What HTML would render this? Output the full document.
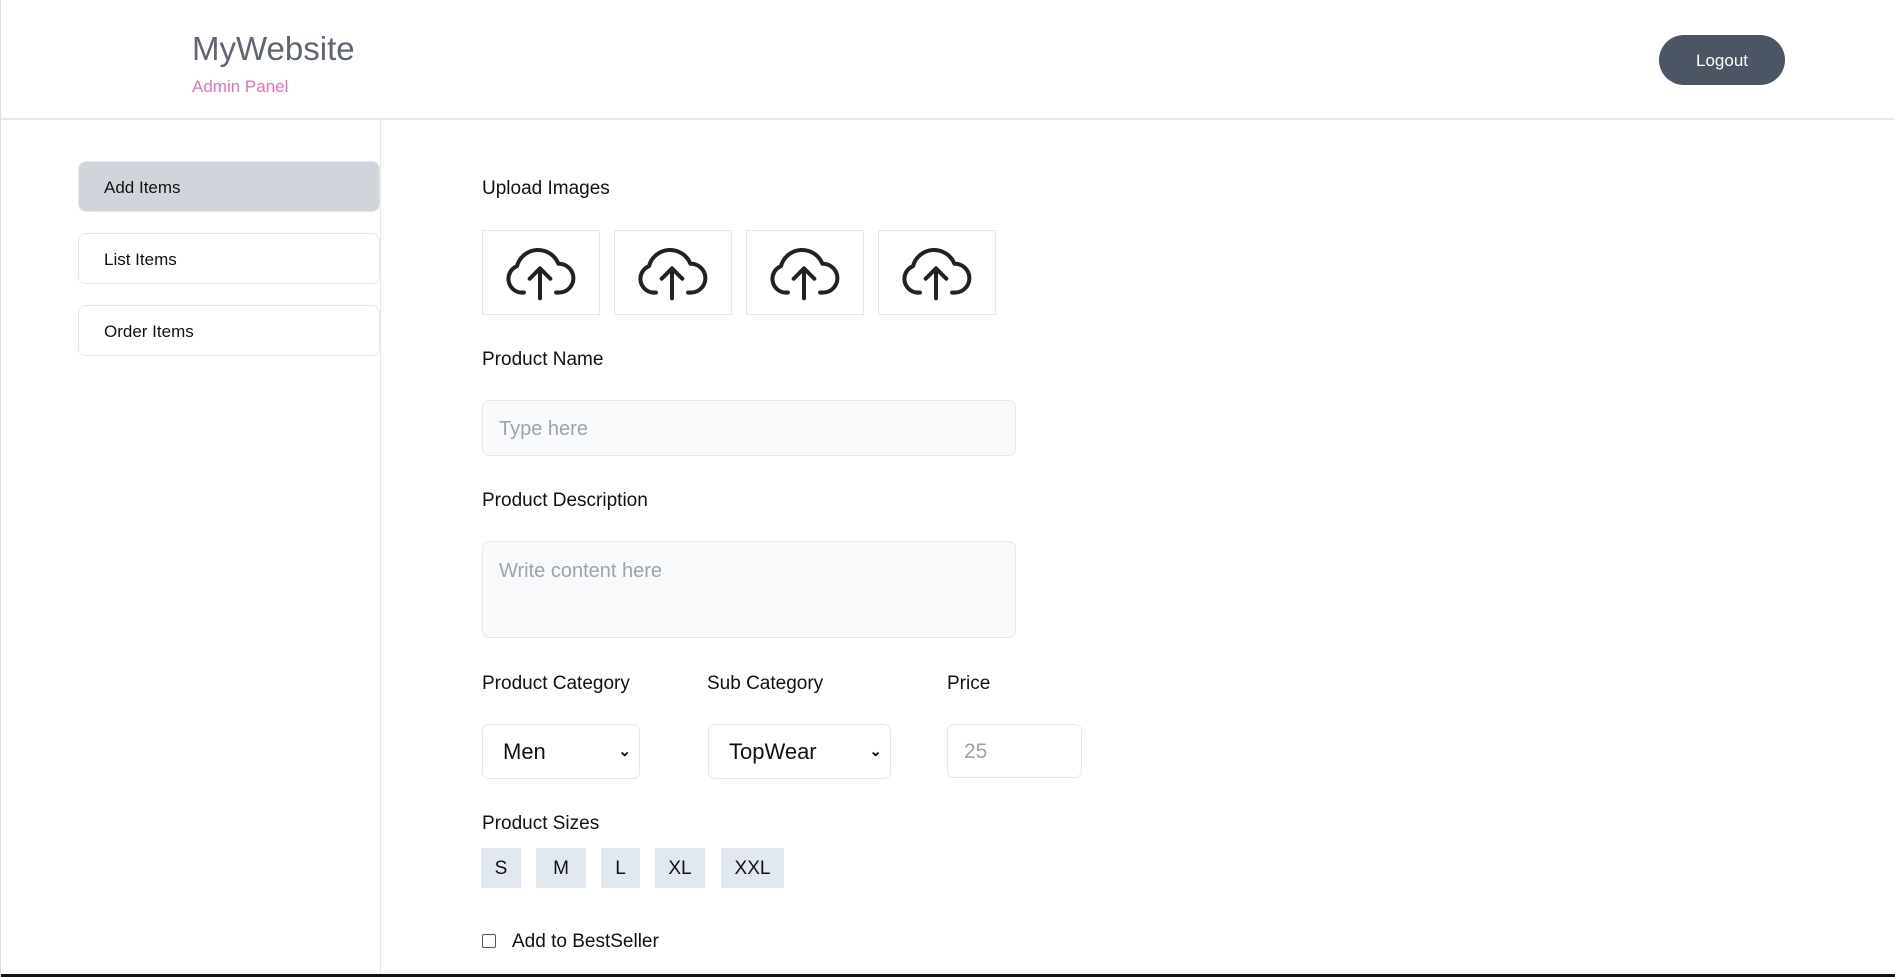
<!DOCTYPE html>
<html><head><meta charset="utf-8"><style>
*{box-sizing:border-box;margin:0;padding:0}
body{width:1895px;height:977px;overflow:hidden;background:#fff;font-family:"Liberation Sans",sans-serif;color:#000;position:relative;border-left:1px solid #ddd}
.abs{position:absolute}
.lbl{position:absolute;font-size:19px;color:#111;line-height:22px}
.box{position:absolute;border:1px solid #e5e7eb;background:#fff}
.side{position:absolute;left:77px;width:302px;height:51px;border:1px solid #e5e7eb;border-radius:8px;font-size:17px;padding-left:25px;line-height:51px;color:#111}
.inp{position:absolute;border:1px solid #e5e7eb;border-radius:7px;background:#f8f9fb;color:#9ca3af;font-size:20px;padding-left:16px}
.sel{position:absolute;border:1px solid #e5e7eb;border-radius:7px;background:#fff;font-size:22px;color:#111;padding-left:20px;line-height:54px}
.sz{position:absolute;top:848px;height:40px;background:#e2e8f0;font-size:19px;line-height:42px;text-align:center;color:#111}
</style></head><body>
<div class="abs" style="left:0;top:118px;width:1895px;height:2px;background:#e5e7eb"></div>
<div class="side" style="top:161px;background:#d1d5db">Add Items</div>
<div class="side" style="top:233px">List Items</div>
<div class="side" style="top:305px">Order Items</div>
<div class="abs" style="left:379px;top:120px;width:1px;height:857px;background:#e5e7eb"></div>
<div class="abs" style="left:191px;top:30px;font-size:33px;color:#5f6672">MyWebsite</div>
<div class="abs" style="left:191px;top:77px;font-size:17px;color:#ec6fb5">Admin Panel</div>
<div class="abs" style="left:1658px;top:35px;width:126px;height:50px;border-radius:25px;background:#4b5563;color:#fff;font-size:17px;text-align:center;line-height:52px">Logout</div>
<div class="lbl" style="left:481px;top:178px">Upload Images</div>
<div class="box" style="left:481px;top:230px;width:118px;height:85px"></div>
<div class="box" style="left:613px;top:230px;width:118px;height:85px"></div>
<div class="box" style="left:745px;top:230px;width:118px;height:85px"></div>
<div class="box" style="left:877px;top:230px;width:118px;height:85px"></div>
<svg class="abs" style="left:0;top:0" width="1895" height="977">
<g fill="none" stroke="#222" stroke-width="3.5" stroke-linecap="round" stroke-linejoin="round">
<g id="c" transform="translate(539,273) scale(1.15)"><path d="M-14 17 H-17 A12 12 0 0 1 -20 -6 A19 19 0 0 1 16 -8 A12.5 12.5 0 0 1 17 17 H14"/><path d="M0 22 V-4 M-9 5 L0 -4 L9 5"/></g>
<use href="#c" x="132"/><use href="#c" x="264"/><use href="#c" x="396"/>
</g></svg>
<div class="lbl" style="left:481px;top:349px">Product Name</div>
<div class="inp" style="left:481px;top:400px;width:534px;height:56px;line-height:56px">Type here</div>
<div class="lbl" style="left:481px;top:490px">Product Description</div>
<div class="inp" style="left:481px;top:541px;width:534px;height:97px;padding-top:18px">Write content here</div>
<div class="lbl" style="left:481px;top:673px">Product Category</div>
<div class="lbl" style="left:706px;top:673px">Sub Category</div>
<div class="lbl" style="left:946px;top:673px">Price</div>
<div class="sel" style="left:481px;top:724px;width:158px;height:55px">Men<span class="abs" style="right:8px;top:0;font-size:15px;font-weight:bold">&#8964;</span></div>
<div class="sel" style="left:707px;top:724px;width:183px;height:55px">TopWear<span class="abs" style="right:8px;top:0;font-size:15px;font-weight:bold">&#8964;</span></div>
<div class="inp" style="left:946px;top:724px;width:135px;height:54px;line-height:54px;background:#fff;font-size:21px">25</div>
<div class="lbl" style="left:481px;top:813px">Product Sizes</div>
<div class="sz" style="left:480px;width:40px">S</div>
<div class="sz" style="left:535px;width:50px">M</div>
<div class="sz" style="left:600px;width:39px">L</div>
<div class="sz" style="left:654px;width:50px">XL</div>
<div class="sz" style="left:720px;width:63px">XXL</div>
<div class="abs" style="left:481px;top:934px;width:14px;height:14px;border:1.5px solid #555;border-radius:2px"></div>
<div class="lbl" style="left:511px;top:931px">Add to BestSeller</div>
<div class="abs" style="left:0;top:974px;width:1895px;height:3px;background:#111"></div>
</body></html>
